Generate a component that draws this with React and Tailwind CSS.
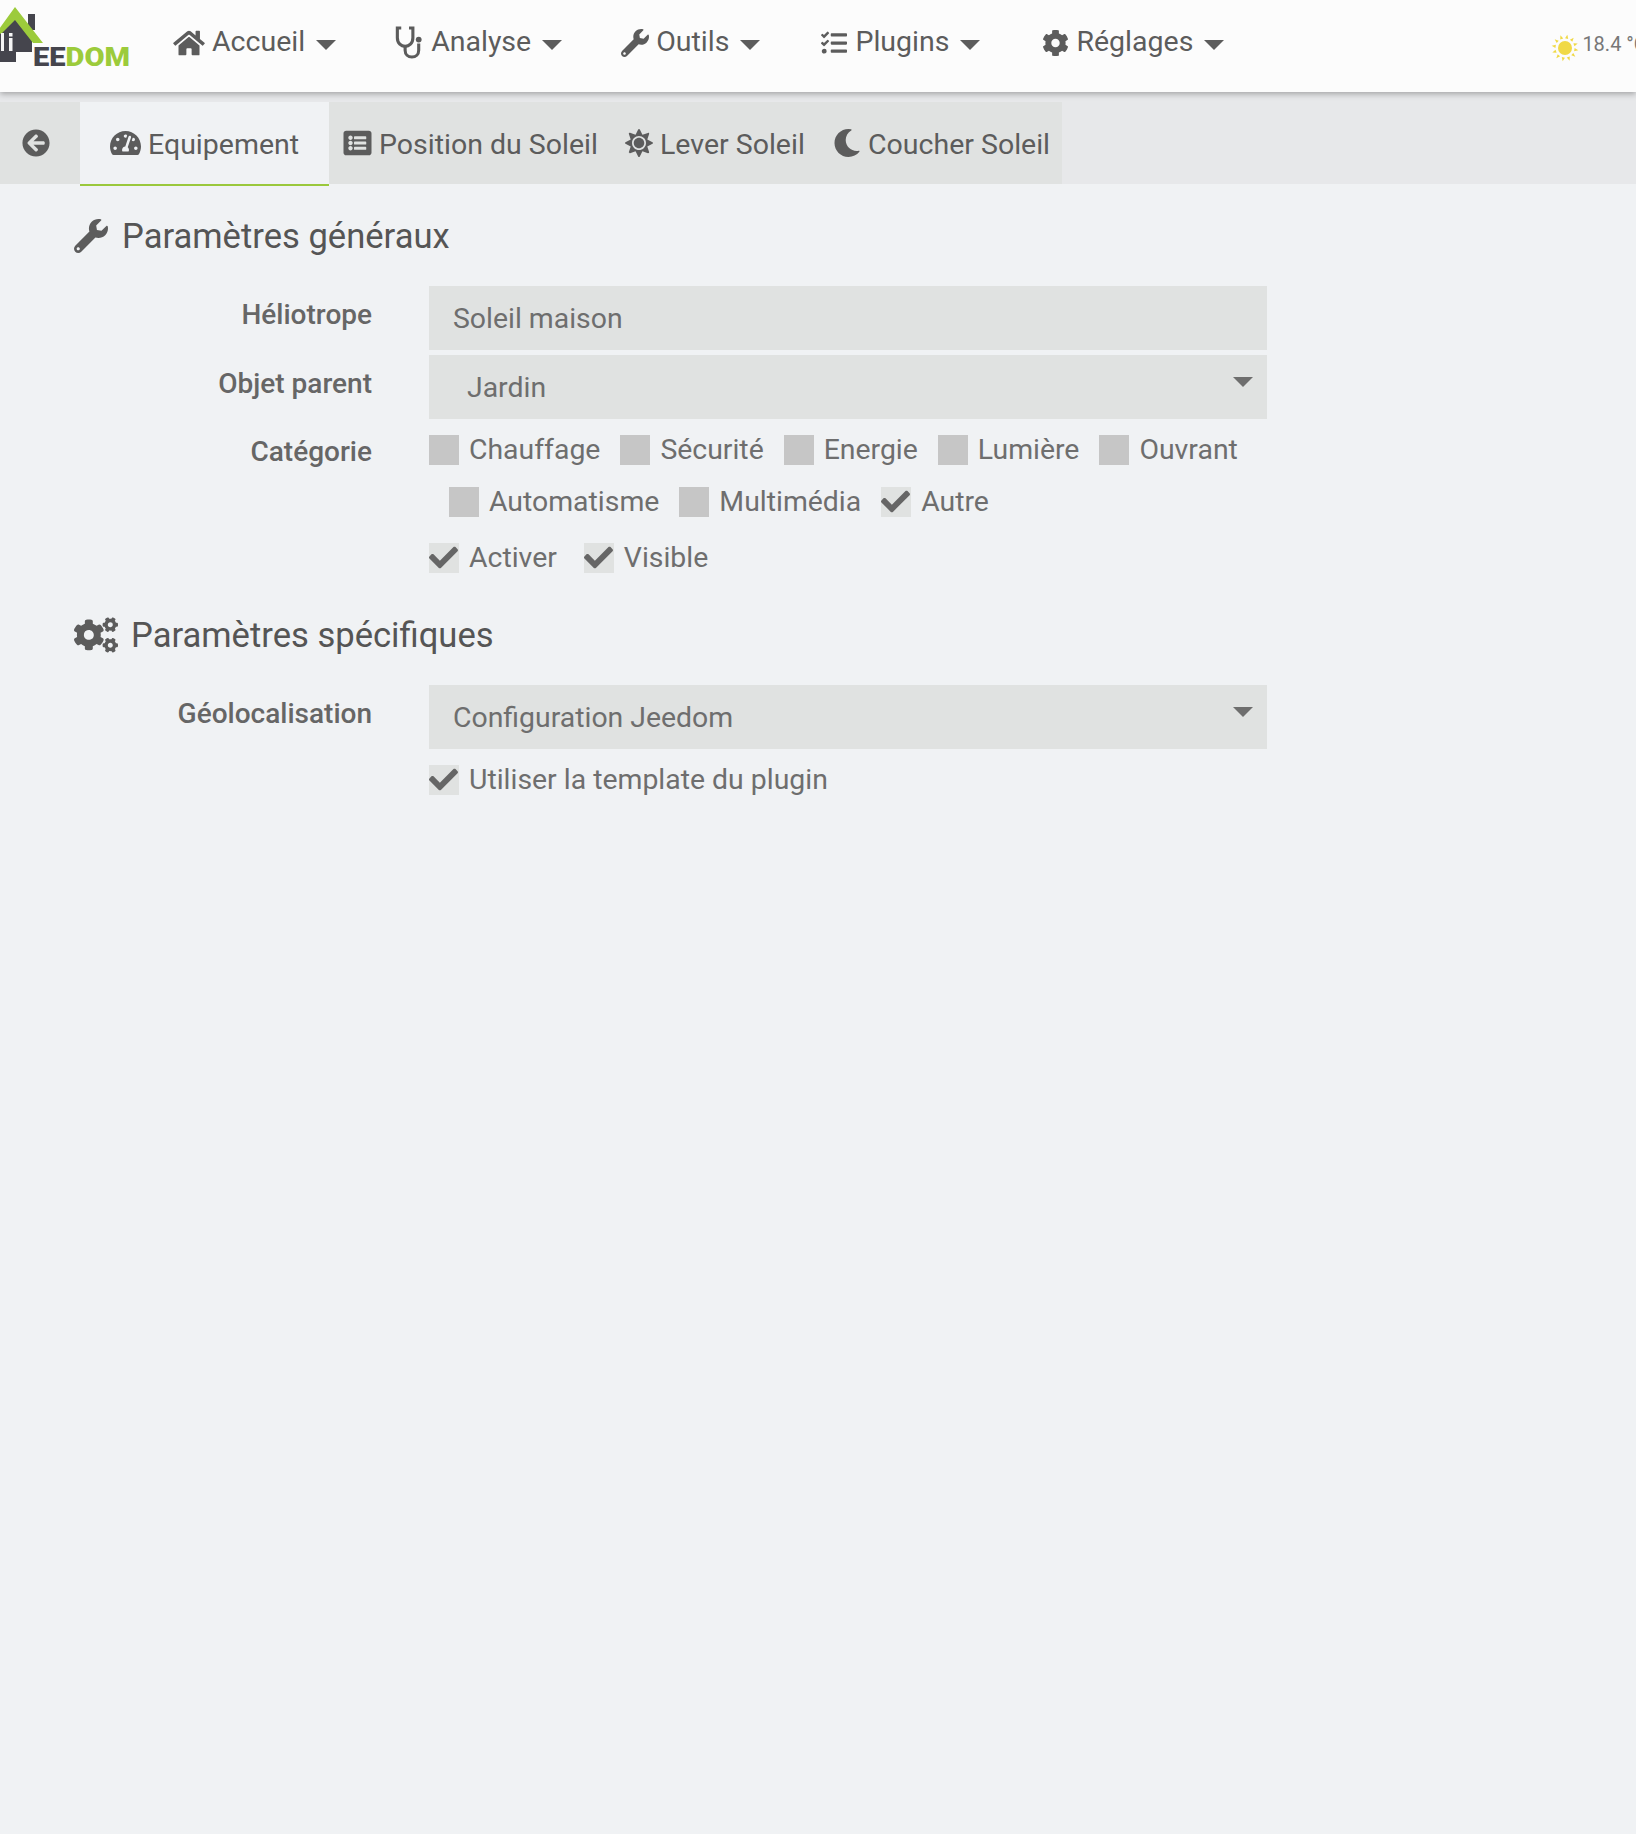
import React from "react";
import { FaHome, FaWrench, FaTasks, FaCog, FaCogs, FaTachometerAlt, FaListAlt, FaMoon, FaArrowCircleLeft, FaCheck, FaSun } from "react-icons/fa";

const Stethoscope = ({ className }) => (
  <svg viewBox="0 0 30 34" className={className} fill="none" stroke="currentColor" strokeWidth="3.2">
    <path d="M7 2 H3 V12 C3 18 7 21 11 21 C15 21 19 18 19 12 V2 H15" />
    <path d="M11 21 V25 C11 29 14 32 18 32 C22 32 25 29 25 25 V18" />
    <circle cx="25" cy="14" r="3" fill="currentColor" stroke="none" />
  </svg>
);

const Logo = () => (
  <svg viewBox="0 0 132 72" className="w-[132px] h-[72px] shrink-0 self-start">
    <rect x="28" y="14" width="7" height="16" fill="#45454d" />
    <path d="M-2 58 V32 L15 18 L32 32 V52 H16 V62 H0 Z" fill="#45454d" />
    <path d="M-3 32 L15 7 L43 43 L33 43 L15 20 L1 34 Z" fill="#9ccb3b" />
    <rect x="9" y="33" width="3.5" height="3.5" fill="#f5f5f5" />
    <rect x="9" y="38" width="3.5" height="13" fill="#f5f5f5" />
    <rect x="1" y="33" width="3" height="18" fill="#f5f5f5" />
    <text x="33" y="65.5" textLength="97" lengthAdjust="spacingAndGlyphs" fontFamily="Roboto, sans-serif" fontWeight="900" fontSize="26">
      <tspan fill="#45454d">EE</tspan>
      <tspan fill="#9ccb3b">DOM</tspan>
    </text>
  </svg>
);

const Sun = () => (
  <svg viewBox="-15 -15 30 30" className="w-[30px] h-[30px] shrink-0">
    <circle r="7" fill="#f0d946" />
    {[0, 30, 60, 90, 120, 150, 180, 210, 240, 270, 300, 330].map((a) => (
      <path key={a} d="M-1.6 -9.5 L1.6 -9.5 L0 -13.5 Z" fill="#f0d946" transform={`rotate(${a + 10})`} />
    ))}
  </svg>
);

const Caret = () => (
  <span className="w-0 h-0 border-t-[10px] border-x-[10px] border-x-transparent border-t-[#5c5c5c] mt-[4px] ml-[11px]" />
);

const NavItem = ({ icon, label, className = "" }) => (
  <div className={`flex items-center ${className}`}>
    {icon}
    <span className="ml-[7px]">{label}</span>
    <Caret />
  </div>
);

const Tab = ({ icon, label, className = "" }) => (
  <div className={`flex items-center h-[82px] ${className}`}>
    {icon}
    <span className="ml-[7px] mt-[4px]">{label}</span>
  </div>
);

const Box = ({ checked, className = "" }) => (
  <span className={`relative block w-[30px] h-[30px] shrink-0 ${checked ? "bg-[#e0e2e1]" : "bg-[#c6c6c6]"} ${className}`}>
    {checked && <FaCheck className="absolute -left-[1px] top-0 w-[31px] h-[29px] text-[#666666]" />}
  </span>
);

const Check = ({ label, checked, className = "" }) => (
  <div className={`flex items-center h-[30px] ${className}`}>
    <Box checked={checked} />
    <span className="ml-[10px]">{label}</span>
  </div>
);

const Label = ({ children, className = "" }) => (
  <div className={`w-[372px] shrink-0 text-right text-[28px] font-medium leading-[32px] text-[#666666] ${className}`}>{children}</div>
);

const Field = ({ children, select, className = "" }) => (
  <div className={`relative flex items-center w-[838px] h-[64px] bg-[#e0e2e1] text-[#6e6e6e] ${className}`}>
    <span className="mt-[3px]">{children}</span>
    {select && (
      <span className="absolute right-[14px] top-[22px] w-0 h-0 border-t-[10px] border-x-[10px] border-x-transparent border-t-[#6e6e6e]" />
    )}
  </div>
);

const Heading = ({ icon, children, className = "" }) => (
  <h2 className={`flex items-center h-[40px] ml-[74px] text-[34.6px] text-[#555555] font-normal ${className}`}>
    {icon}
    <span className="mt-[1px]">{children}</span>
  </h2>
);

export default function App() {
  return (
    <div className="w-[1636px] h-[1834px] overflow-hidden bg-[#f0f2f4] font-['Roboto',sans-serif] text-[28.5px]">
      <header className="relative z-10 flex items-center h-[92px] bg-[#fcfcfc] text-[#5c5c5c] shadow-[0_2px_6px_rgba(0,0,0,0.3)]">
        <Logo />
        <div className="flex items-center ml-[41px] mb-[7px]">
          <NavItem icon={<FaHome className="w-[32px] h-[28px]" />} label="Accueil" className="mr-[58px]" />
          <NavItem icon={<Stethoscope className="w-[30px] h-[33px]" />} label="Analyse" className="mr-[59px]" />
          <NavItem icon={<FaWrench className="w-[28px] h-[28px]" />} label="Outils" className="mr-[60px]" />
          <NavItem icon={<FaTasks className="w-[28px] h-[26px]" />} label="Plugins" className="mr-[62px]" />
          <NavItem icon={<FaCog className="w-[27px] h-[28px]" />} label="Réglages" />
        </div>
        <div className="flex items-center ml-[326px] text-[20px] text-[#777777] whitespace-nowrap mt-[4px]">
          <Sun />
          <span className="ml-[2px] -mt-[8px]">18.4 °C</span>
        </div>
      </header>

      <nav className="flex items-end h-[92px] bg-[#e7e8ea] text-[#5c5c5c]">
        <div className="flex items-center w-[80px] h-[82px] pl-[22px] bg-[#e0e2e1]">
          <FaArrowCircleLeft className="w-[28px] h-[28px]" />
        </div>
        <div className="relative flex items-center w-[249px] h-[82px] pl-[30px] bg-[#f0f2f4]">
          <FaTachometerAlt className="w-[31px] h-[28px]" />
          <span className="ml-[7px] mt-[4px]">Equipement</span>
          <span className="absolute left-0 right-0 top-[82px] h-[2px] bg-[#9ac83c]" />
        </div>
        <Tab icon={<FaListAlt className="w-[29px] h-[28px]" />} label="Position du Soleil" className="w-[282px] pl-[14px] bg-[#e0e2e1]" />
        <Tab icon={<FaSun className="w-[28px] h-[28px]" />} label="Lever Soleil" className="w-[207px] pl-[14px] bg-[#e0e2e1]" />
        <Tab icon={<FaMoon className="w-[28px] h-[32px]" />} label="Coucher Soleil" className="w-[244px] pl-[15px] bg-[#e0e2e1]" />
      </nav>

      <main className="pt-[32px] text-[#6e6e6e] text-[28.4px]">
        <Heading icon={<FaWrench className="w-[34px] h-[34px] mr-[14px] text-[#5c5c5c]" />}>Paramètres généraux</Heading>

        <div className="flex mt-[30px]">
          <Label className="pt-[13px]">Héliotrope</Label>
          <Field className="ml-[57px] pl-[24px]">Soleil maison</Field>
        </div>
        <div className="flex mt-[5px]">
          <Label className="pt-[13px]">Objet parent</Label>
          <Field select className="ml-[57px] pl-[38px]">Jardin</Field>
        </div>
        <div className="flex mt-[16px]">
          <Label className="pt-[1px]">Catégorie</Label>
          <div className="ml-[57px] w-[838px]">
            <div className="flex">
              <Check label="Chauffage" className="mr-[20px]" />
              <Check label="Sécurité" className="mr-[20px]" />
              <Check label="Energie" className="mr-[20px]" />
              <Check label="Lumière" className="mr-[20px]" />
              <Check label="Ouvrant" />
            </div>
            <div className="flex mt-[22px] ml-[20px]">
              <Check label="Automatisme" className="mr-[20px]" />
              <Check label="Multimédia" className="mr-[20px]" />
              <Check label="Autre" checked />
            </div>
            <div className="flex mt-[26px]">
              <Check label="Activer" checked className="mr-[27px]" />
              <Check label="Visible" checked />
            </div>
          </div>
        </div>

        <Heading icon={<FaCogs className="w-[44px] h-[36px] mr-[13px] text-[#5c5c5c]" />} className="mt-[42px]">Paramètres spécifiques</Heading>

        <div className="flex mt-[30px]">
          <Label className="pt-[13px]">Géolocalisation</Label>
          <Field select className="ml-[57px] pl-[24px]">Configuration Jeedom</Field>
        </div>
        <div className="flex mt-[16px] ml-[429px]">
          <Check label="Utiliser la template du plugin" checked />
        </div>
      </main>
    </div>
  );
}
